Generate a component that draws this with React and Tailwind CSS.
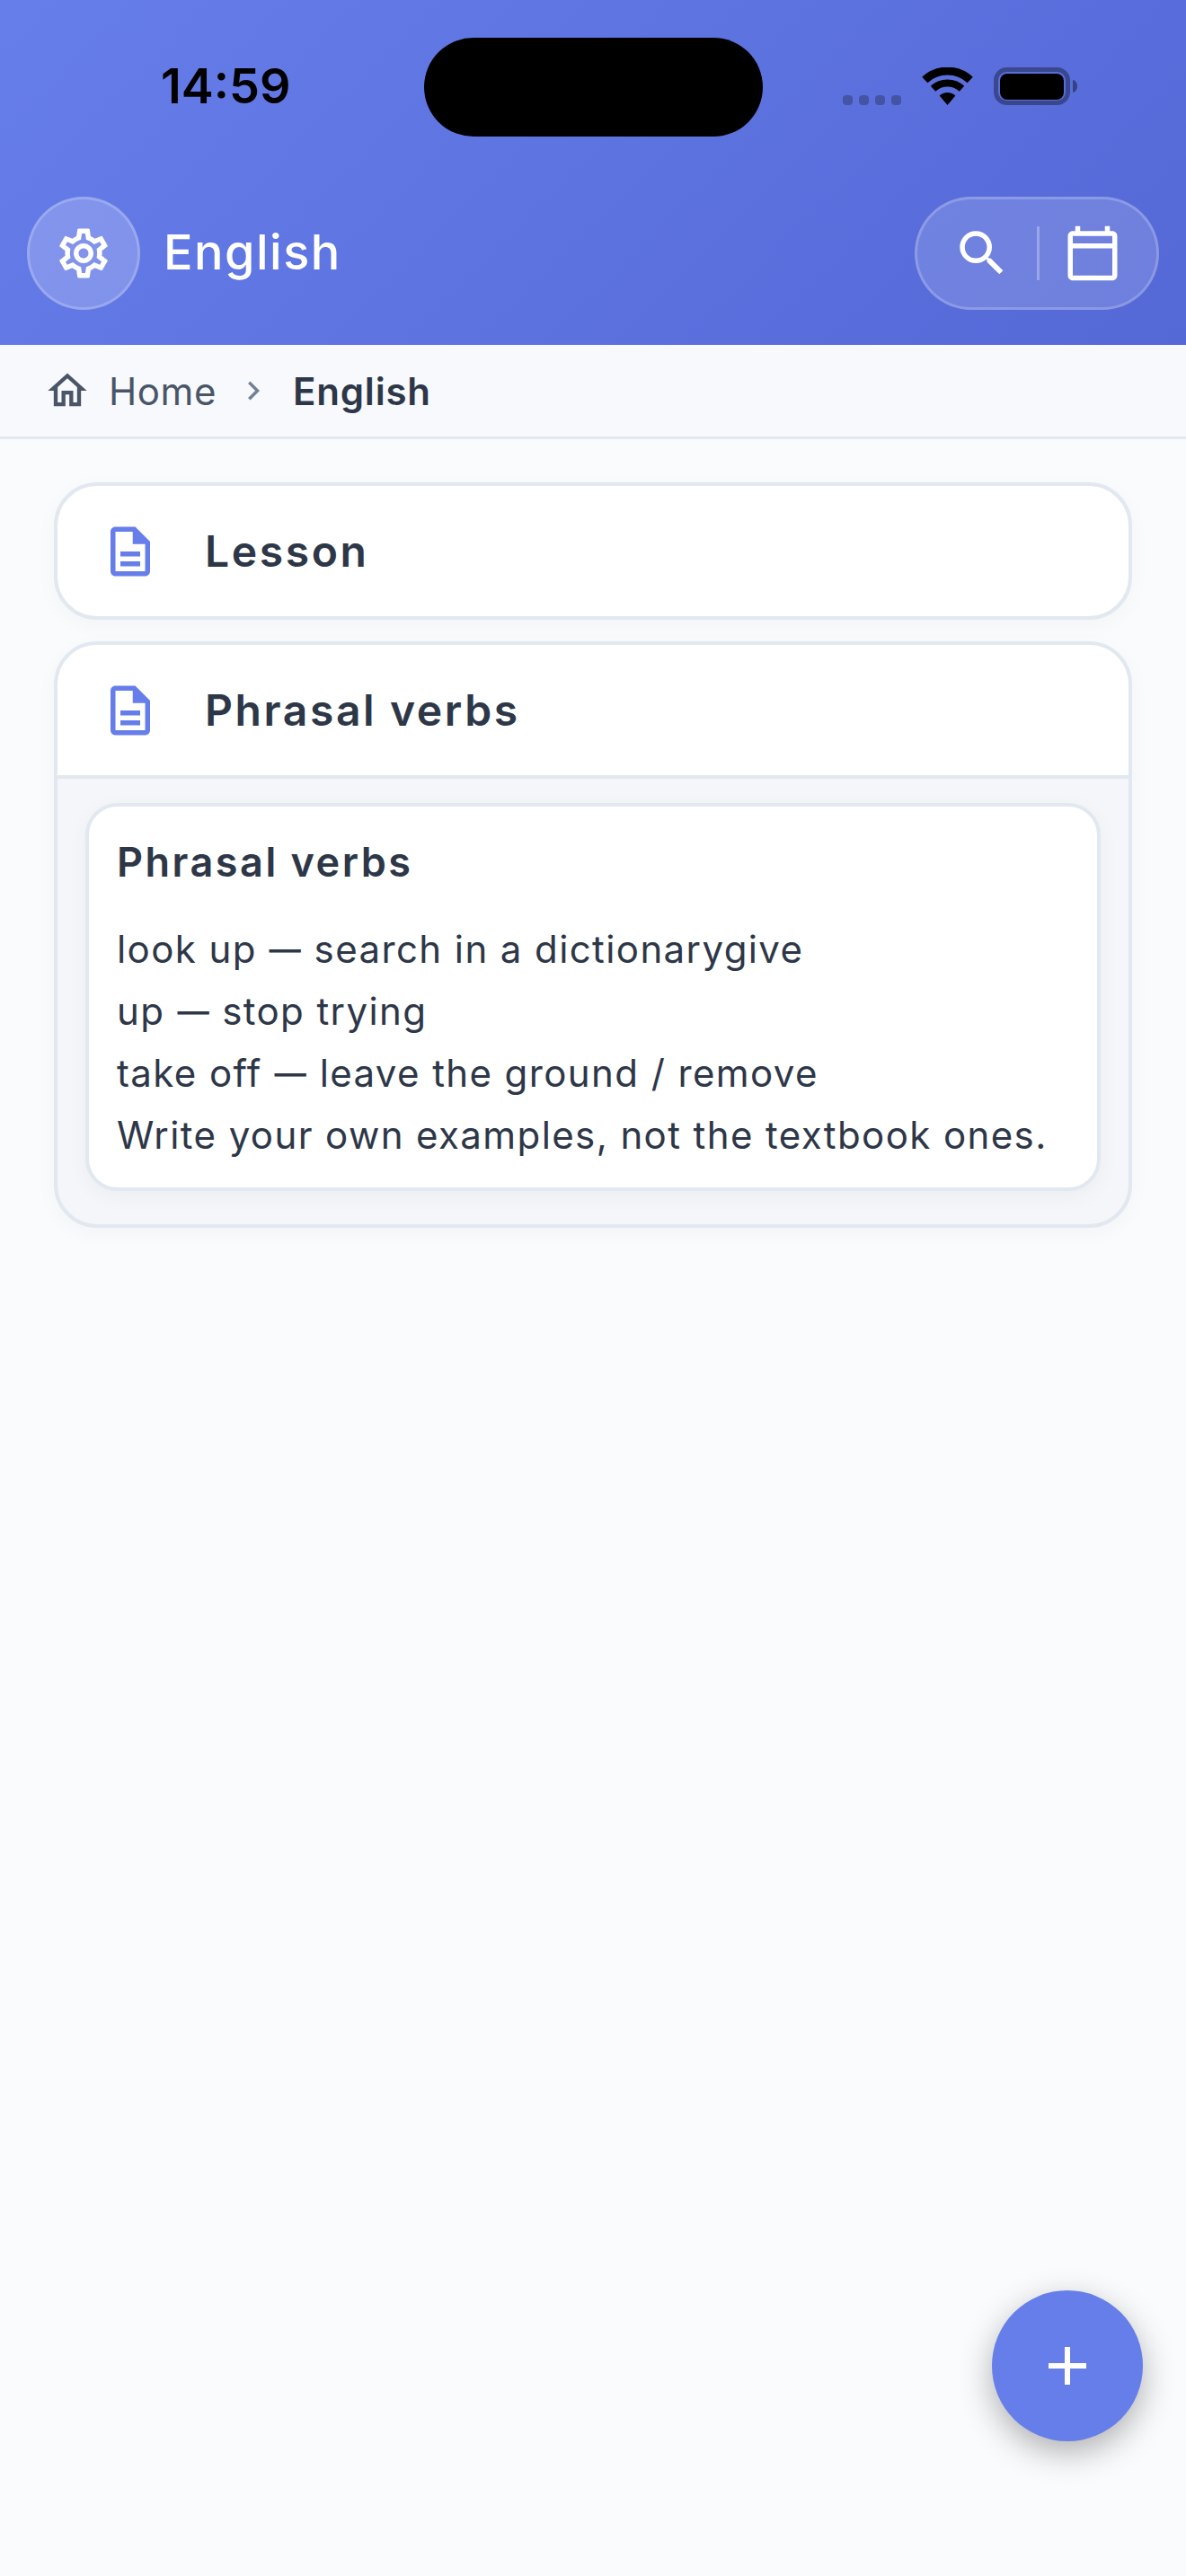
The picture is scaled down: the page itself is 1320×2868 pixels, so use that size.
import React from 'react';
import { MdOutlineSettings, MdOutlineDescription, MdOutlineHome, MdSearch, MdAdd, MdChevronRight } from 'react-icons/md';

const noteLines = [
  ['look up', 'search in a dictionarygive'],
  ['up', 'stop trying'],
  ['take off', 'leave the ground / remove'],
  ['Write your own examples, not the textbook ones.'],
];

const CalendarIcon = () => (
  <svg width="66" height="66" viewBox="0 0 24 24" fill="currentColor">
    <path fillRule="evenodd" d="M20 3h-1V1h-2v2H7V1H5v2H4c-1.1 0-2 .9-2 2v16c0 1.1.9 2 2 2h16c1.1 0 2-.9 2-2V5c0-1.1-.9-2-2-2zm0 18H4V10h16v11zm0-13H4V5h16v3z" />
  </svg>
);

const StatusIcons = () => (
  <div className="flex items-end">
    <div className="flex gap-[7px] mr-[23px]">
      {[0, 1, 2, 3].map((i) => (
        <span key={i} className="w-[11px] h-[11px] rounded-[4px] bg-black/25" />
      ))}
    </div>
    <svg width="57" height="42" viewBox="0 0 57 42" className="mr-[23px]">
      <path d="M3.3 14A37 37 0 0 1 53.7 14" fill="none" stroke="#000" strokeWidth="9" />
      <path d="M12.5 23.8A23.5 23.5 0 0 1 44.5 23.8" fill="none" stroke="#000" strokeWidth="8" />
      <path d="M28.5 42L19.6 31.5A13 13 0 0 1 37.4 31.5Z" fill="#000" />
    </svg>
    <svg width="93" height="42" viewBox="0 0 93 42">
      <rect x="2.5" y="2.5" width="80" height="37" rx="12" fill="none" stroke="#000" strokeOpacity="0.35" strokeWidth="5" />
      <rect x="7" y="7" width="71" height="29" rx="8" fill="#000" />
      <path d="M88 14c3 .5 5 3.500 5 7s-2 6.500-5 7z" fill="#000" fillOpacity="0.4" />
    </svg>
  </div>
);

const Header = () => (
  <header className="relative h-[384px] shrink-0 bg-linear-[135deg,#667eea,#5468d6]">
    {/* Status bar */}
    <div className="h-[219px] pl-[179px] pr-[121px] pt-[75px] flex justify-between items-start">
      <span className="text-[54px] leading-[42px] font-semibold text-black">14:59</span>
      <StatusIcons />
    </div>
    <div className="absolute left-[472px] top-[42px] w-[377px] h-[110px] rounded-[55px] bg-black" />

    {/* Toolbar */}
    <div className="h-[126px] px-[30px] flex items-center justify-between text-white">
      <div className="flex items-center gap-[26px]">
        <button className="w-[126px] h-[126px] rounded-full bg-white/20 border-[3px] border-white/20 flex items-center justify-center">
          <MdOutlineSettings size={66} />
        </button>
        <h1 className="text-[54px] font-medium tracking-[1.5px] -translate-y-[2px]">English</h1>
      </div>
      <div className="w-[272px] h-[126px] rounded-[63px] bg-white/15 border-[3px] border-white/20 flex items-center pl-[39px]">
        <MdSearch size={66} />
        <span className="w-[3px] h-[60px] bg-white/30 ml-[28px] mr-[26px]" />
        <CalendarIcon />
      </div>
    </div>
  </header>
);

const Breadcrumb = () => (
  <nav className="h-[105px] shrink-0 bg-[#f7f9fc] border-b-[3px] border-[#e2e8f0] pl-[49px] flex items-center text-[42px]">
    <MdOutlineHome size={52} className="text-[#4a5568]" />
    <span className="ml-[20px] text-[#4a5568] tracking-[0.6px]">Home</span>
    <MdChevronRight size={42} className="ml-[20px] text-[#718096]" />
    <span className="ml-[23px] font-semibold text-[#2d3748] tracking-[0.8px]">English</span>
  </nav>
);

const CardHeader = ({ title }) => (
  <div className="h-[145px] flex items-center pl-[48px]">
    <MdOutlineDescription size={66} className="text-[#667eea]" />
    <span className="ml-[50px] text-[48px] font-semibold text-[#2d3748] tracking-[2.6px]">{title}</span>
  </div>
);

export default function App() {
  return (
    <div className="relative w-[1320px] h-[2868px] flex flex-col bg-[#fafbfd] font-[Inter,sans-serif] overflow-hidden">
      <Header />
      <Breadcrumb />

      <main className="px-[60px] pt-[48px] flex flex-col gap-[24px]">
        <div className="rounded-[48px] border-4 border-[#e2e8f0] bg-white shadow-[0_6px_24px_rgba(0,0,0,0.03)]">
          <CardHeader title="Lesson" />
        </div>

        <div className="rounded-[48px] border-4 border-[#e2e8f0] bg-[#f4f6fa] overflow-hidden shadow-[0_6px_24px_rgba(0,0,0,0.03)]">
          <div className="bg-white border-b-4 border-[#e2e8f0]">
            <CardHeader title="Phrasal verbs" />
          </div>
          <div className="pt-[27px] pb-[37px] px-[31px]">
            <div className="rounded-[36px] border-4 border-[#e2e8f0] bg-white pl-[31px] pt-[32px] pb-[24px] shadow-[0_6px_24px_rgba(0,0,0,0.04)]">
              <h3 className="text-[45px] leading-[60px] font-semibold text-[#2d3748] tracking-[2.5px]">Phrasal verbs</h3>
              <div className="mt-[32px] text-[42px] leading-[69px] text-[#2d3748] tracking-[1.4px]">
                {noteLines.map(([first, rest]) => (
                  <div key={first}>
                    {first}
                    {rest && (
                      <>
                        {' '}
                        <span className="inline-block -mx-[3px] scale-x-[0.84]">—</span> {rest}
                      </>
                    )}
                  </div>
                ))}
              </div>
            </div>
          </div>
        </div>
      </main>

      {/* Add button */}
      <button className="absolute left-[1104px] top-[2550px] w-[168px] h-[168px] rounded-full bg-[#667eea] text-white flex items-center justify-center shadow-[0_12px_36px_rgba(0,0,0,0.3)]">
        <MdAdd size={72} />
      </button>
    </div>
  );
}
